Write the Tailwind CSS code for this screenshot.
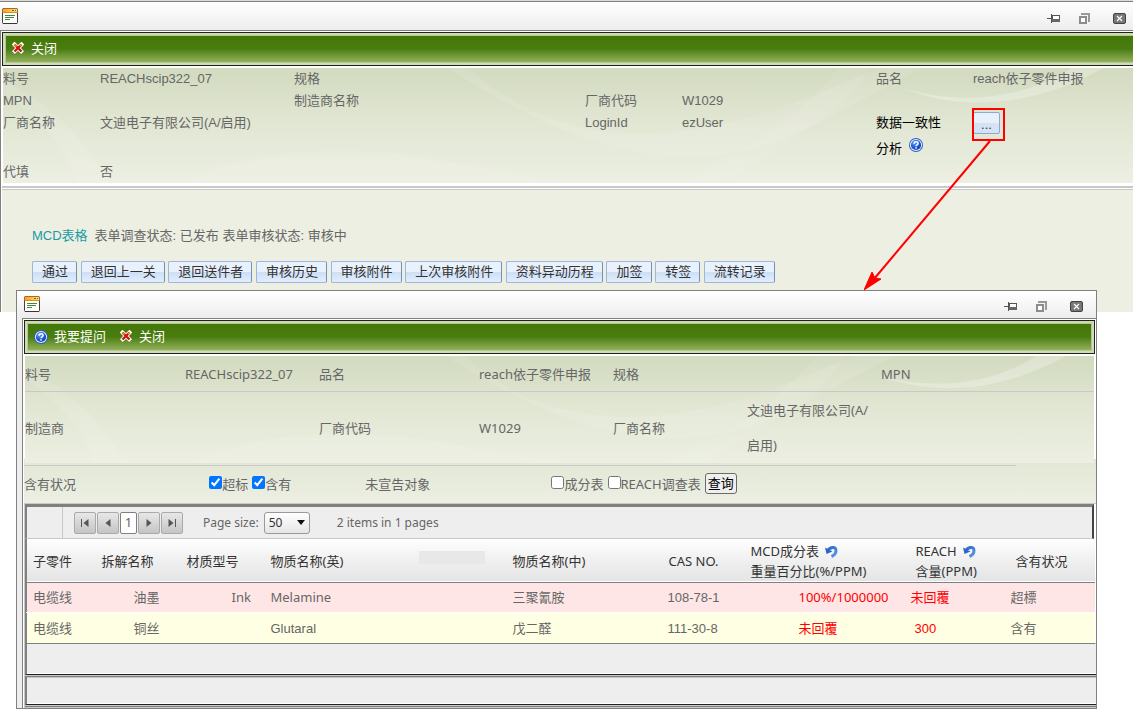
<!DOCTYPE html>
<html lang="zh-CN">
<head>
<meta charset="utf-8">
<meta name="viewport" content="width=device-width, initial-scale=1">
<title>REACH 审核</title>
<script src="https://cdn.jsdelivr.net/npm/@tailwindcss/browser@4"></script>
</head>
<body class="relative min-h-screen bg-white font-['Liberation_Sans','Noto_Sans_CJK_SC',sans-serif] text-[13px] text-[#666]">

<!-- Shared icons -->
<svg class="absolute size-0" aria-hidden="true">
  <defs>
    <linearGradient id="g-orange" x1="0" y1="0" x2="1" y2="0"><stop offset="0" stop-color="#f9a11c"/><stop offset="1" stop-color="#ffe07a"/></linearGradient>
    <radialGradient id="g-blue" cx=".35" cy=".3" r=".8"><stop offset="0" stop-color="#6fa8f5"/><stop offset=".5" stop-color="#1f5bd8"/><stop offset="1" stop-color="#0f3fb4"/></radialGradient>
    <linearGradient id="g-undo" x1="0" y1="0" x2="1" y2="1"><stop offset="0" stop-color="#2a62c4"/><stop offset="1" stop-color="#5d97ea"/></linearGradient>
  </defs>
  <symbol id="i-form" viewBox="0 0 16 16">
    <rect x=".5" y=".5" width="15" height="15" rx="1" fill="#fff" stroke="#4a4038"/>
    <rect x="1" y="1" width="14" height="4" fill="url(#g-orange)"/>
    <path d="M.5 5V1.500L1.500 .5h13l1 1V5" fill="none" stroke="#b4612c"/>
    <path d="M1 4.500h14" stroke="#d88a2a"/>
    <path d="M10 2.500h2M13 2.500h1" stroke="#3c7a2c"/>
    <path d="M3 7.500h10M3 9.500h9M3 11.500h5" stroke="#3d8a35"/>
    <path d="M1 15.500h14" stroke="#3c3430"/>
  </symbol>
  <symbol id="i-x" viewBox="0 0 12 12">
    <path d="M2.500 2.500l7 7M9.500 2.500l-7 7" stroke="#fff" stroke-width="4" stroke-linecap="square" stroke-dasharray="1.400 .6"/>
    <path d="M2.500 2.500l7 7M9.500 2.500l-7 7" stroke="#d40f0f" stroke-width="2.400"/>
    <path d="M2.200 2.200l2.300 2.300M9.500 2.500l-1.500 1.500" stroke="#f0962a" stroke-width="1.500"/>
  </symbol>
  <symbol id="i-help" viewBox="0 0 14 14">
    <circle cx="7" cy="7" r="7" fill="#2d5fc4"/>
    <circle cx="7" cy="7" r="6.100" fill="#e4eefb"/>
    <circle cx="7" cy="7" r="5.100" fill="url(#g-blue)"/>
    <path d="M5.100 5.700C5.100 4.300 6 3.700 7.100 3.700s2 .7 2 1.700c0 1.400-2 1.400-2 2.900" fill="none" stroke="#fff" stroke-width="1.500"/>
    <rect x="6.300" y="9.200" width="1.500" height="1.500" fill="#fff"/>
  </symbol>
  <symbol id="i-pin" viewBox="0 0 14 10">
    <path d="M0 4.500h4" stroke="#555"/>
    <path d="M4.500 0v9" stroke="#555"/>
    <rect x="5.500" y="1.500" width="7" height="6" fill="#fff" stroke="#555"/>
    <rect x="5" y="5" width="8" height="3" fill="#666"/>
  </symbol>
  <symbol id="i-restore" viewBox="0 0 11 11">
    <path d="M2 1h8v8" fill="none" stroke="#999" stroke-width="2"/>
    <rect x="1" y="4" width="6" height="6" fill="#fff" stroke="#8c8c8c" stroke-width="2"/>
  </symbol>
  <symbol id="i-close" viewBox="0 0 13 11">
    <rect x=".5" y=".5" width="12" height="10" rx="1.500" fill="#777" stroke="#444"/>
    <path d="M4 3l5 5M9 3l-5 5" stroke="#fff" stroke-width="1.200"/>
  </symbol>
  <symbol id="i-undo" viewBox="0 0 13 13">
    <path d="M2.500 6.200C4.500 2 11 .8 11 5.500c0 3-2 5-4.500 6" fill="none" stroke="url(#g-undo)" stroke-width="3"/>
    <path d="M0 2.500l1.500 6.500 6-2.500z" fill="#2a66ca"/>
  </symbol>
  <!-- Translucent ribbons that cross the green header panels -->
  <symbol id="i-ribbons" viewBox="0 0 1068 115" preserveAspectRatio="none">
    <path d="M0 12C50 40 80 75 100 115H70C60 80 30 45 0 25z" fill="#fff" opacity=".1"/>
    <path d="M440 0C500 60 580 75 660 60S790 15 830 0H870C790 40 740 85 660 88S510 60 420 0z" fill="#fff" opacity=".1"/>
    <path d="M680 115C730 80 790 50 820 0H790C760 40 720 75 640 115z" fill="#fff" opacity=".08"/>
    <path d="M850 20C910 46 980 36 1040 0H1010C960 34 900 36 850 20z" fill="#fff" opacity=".25"/>
    <path d="M170 115C230 80 330 78 400 90S520 115 560 115z" fill="#fff" opacity=".1"/>
  </symbol>
</svg>

<!-- Main window -->
<main class="border-t border-[#dcdcdc]">
  <header class="flex h-[30px] items-start justify-between border-y border-[#808080] bg-linear-to-b from-white to-[#ededed] pt-[6px] pr-[7px] pl-[2px]">
    <svg class="size-4"><use href="#i-form"/></svg>
    <div class="flex items-center pt-[5px]">
      <button type="button" aria-label="固定" class="mr-[18px]"><svg class="h-[10px] w-[14px]"><use href="#i-pin"/></svg></button>
      <button type="button" aria-label="还原" class="mr-[23px]"><svg class="size-[11px]"><use href="#i-restore"/></svg></button>
      <button type="button" aria-label="关闭窗口"><svg class="h-[11px] w-[13px]"><use href="#i-close"/></svg></button>
    </div>
  </header>

  <div class="border-l border-[#808080] bg-white pt-px pl-px">
    <div class="border border-r-0 border-[#1c2611] bg-[#d0d9bb] py-[2px] pl-[2px]">
      <div class="flex h-[28px] items-center border border-r-0 border-[#b5c794] bg-linear-to-b from-[#437706] via-[#4a7d10] to-[#93b158] pl-[6px] text-white">
        <button type="button" class="flex items-center gap-[7px]"><svg class="mb-[2px] size-3"><use href="#i-x"/></svg>关闭</button>
      </div>
    </div>

    <section class="relative mt-[2px] ml-px bg-linear-to-b from-[#d2dabf] via-[#e2e7d4] to-[#ecefe2] leading-[22px]">
      <svg class="absolute inset-0 size-full" aria-hidden="true"><use href="#i-ribbons"/></svg>
      <div class="relative grid grid-cols-[97fr_194fr_97fr_194fr_97fr_194fr_97fr_160fr] whitespace-nowrap">
        <div>料号</div><div>REACHscip322_07</div><div>规格</div><div></div><div></div><div></div><div>品名</div><div>reach依子零件申报</div>
        <div>MPN</div><div></div><div>制造商名称</div><div></div><div>厂商代码</div><div>W1029</div><div></div><div></div>
        <div>厂商名称</div><div>文迪电子有限公司(A/启用)</div><div></div><div></div><div>LoginId</div><div>ezUser</div>
        <div class="h-[49px] text-black">
          <div>数据一致性</div>
          <div class="flex pt-[4px]">分析<button type="button" aria-label="说明" class="mb-2 ml-[7px]"><svg class="size-[14px]"><use href="#i-help"/></svg></button></div>
        </div>
        <div class="relative">
          <button type="button" class="block h-[22px] w-[27px] rounded-[2px] border border-[#8fa9cd] bg-linear-to-b from-[#e8f0fc] from-50% to-[#d3e2f5] to-50% pt-[3px] leading-none text-[#333]">...</button>
          <span class="absolute -top-1 -left-px h-[33px] w-[33px] border-2 border-[#f00]"></span>
        </div>
        <div>代填</div><div>否</div><div></div><div></div><div></div><div></div><div></div><div></div>
      </div>
    </section>

    <section class="mt-[3px] border-t-2 border-[#c8c8c8]">
      <div class="mt-px min-h-[123px] border-t border-[#c8c8c8] bg-[#edefe2] pt-[36px] pl-[30px]">
        <p class="leading-[20px]"><a href="#" class="mr-[7px] text-[#1a9ba6]">MCD表格</a>表单调查状态: 已发布 表单审核状态: 审核中</p>
        <div class="pt-[15px] leading-[22px] [&>button]:h-[22px] [&>button]:rounded-[2px] [&>button]:border [&>button]:border-[#a0b6d8] [&>button]:border-r-[#6f8fbc] [&>button]:bg-linear-to-b [&>button]:from-[#e9f1fd] [&>button]:from-50% [&>button]:via-[#cddff5] [&>button]:via-50% [&>button]:to-[#e2edfc] [&>button]:pr-2 [&>button]:pl-[9px] [&>button]:align-top [&>button]:leading-[20px] [&>button]:text-[#333]">
          <button type="button">通过</button>
          <button type="button">退回上一关</button>
          <button type="button">退回送件者</button>
          <button type="button">审核历史</button>
          <button type="button">审核附件</button>
          <button type="button">上次审核附件</button>
          <button type="button">资料异动历程</button>
          <button type="button">加签</button>
          <button type="button">转签</button>
          <button type="button">流转记录</button>
        </div>
      </div>
    </section>
  </div>
</main>

<!-- Dialog window -->
<div role="dialog" aria-label="数据一致性分析" class="absolute top-[290px] right-9 left-4 border border-[#808080] bg-[#eee] font-['Noto_Sans','Noto_Sans_CJK_SC',sans-serif]">
  <header class="flex h-[27px] items-start justify-between bg-linear-to-b from-white to-[#ededed] pt-[5px] pr-[13px] pl-[7px]">
    <svg class="size-4"><use href="#i-form"/></svg>
    <div class="flex items-center pt-[5px]">
      <button type="button" aria-label="固定" class="mr-[18px]"><svg class="h-[10px] w-[14px]"><use href="#i-pin"/></svg></button>
      <button type="button" aria-label="还原" class="mr-[23px]"><svg class="size-[11px]"><use href="#i-restore"/></svg></button>
      <button type="button" aria-label="关闭窗口"><svg class="h-[11px] w-[13px]"><use href="#i-close"/></svg></button>
    </div>
  </header>

  <div class="ml-[5px] border-t border-l border-[#808080] bg-white pt-px pl-px">
    <div class="mr-px border border-[#1c2611] bg-[#d0d9bb] p-[2px]">
      <div class="flex h-[28px] items-center gap-[14px] border border-[#b5c794] bg-linear-to-b from-[#437706] via-[#4a7d10] to-[#93b158] pl-[6px] text-white">
        <button type="button" class="flex items-center gap-[6px]"><svg class="size-[14px]"><use href="#i-help"/></svg>我要提问</button>
        <button type="button" class="flex items-center gap-[7px]"><svg class="mb-[2px] size-3"><use href="#i-x"/></svg>关闭</button>
      </div>
    </div>

    <section class="relative mt-[2px] mr-[2px] ml-px bg-linear-to-b from-[#d2dabf] via-[#e2e7d4] to-[#ecefe2]">
      <svg class="absolute inset-0 size-full" aria-hidden="true"><use href="#i-ribbons"/></svg>
      <div class="relative grid grid-cols-[160fr_134fr_160fr_134fr_134fr_134fr_213fr] border-b border-[#c8c8c8] pt-px leading-[34px]">
        <div>料号</div><div>REACHscip322_07</div><div>品名</div><div class="whitespace-nowrap">reach依子零件申报</div><div>规格</div><div></div><div>MPN</div>
      </div>
      <div class="relative -mb-1 grid grid-cols-[160fr_134fr_160fr_134fr_134fr_134fr_213fr] items-center pt-px leading-[35px]">
        <div>制造商</div><div></div><div>厂商代码</div><div>W1029</div><div>厂商名称</div><div>文迪电子有限公司(A/<br>启用)</div><div></div>
      </div>
    </section>

    <section class="bg-linear-to-b from-[#e2e7d5] to-[#ecefe2] pt-[6px]">
      <div class="mr-20 border-t border-[#c8c8c8]"></div>
      <div class="grid grid-cols-[185fr_156fr_186fr_544fr] pb-px leading-[36px] whitespace-nowrap">
        <div>含有状况</div>
        <div class="flex items-center">
          <label class="mr-1 flex items-center"><input type="checkbox" checked class="mb-[3px] size-[13px]">超标</label>
          <label class="flex items-center"><input type="checkbox" checked class="mb-[3px] size-[13px]">含有</label>
        </div>
        <div>未宣告对象</div>
        <div class="flex items-center">
          <label class="mr-1 flex items-center"><input type="checkbox" class="mb-[3px] size-[13px]">成分表</label>
          <label class="mr-1 flex items-center"><input type="checkbox" class="mb-[3px] size-[13px]">REACH调查表</label>
          <button type="button" class="mb-[2px] h-[21px] rounded-[3px] border border-[#6b6b6b] bg-[#efefef] px-[2px] leading-[19px] text-black">查询</button>
        </div>
      </div>
    </section>

    <section class="border-t border-l border-[#c8c8c8] text-[#666]">
      <div class="mr-[2px] flex h-[35px] items-stretch border-t-[3px] border-r-2 border-b border-l-2 border-[#808080] border-r-[#444] border-b-[#c8c8c8] bg-[#eee]">
        <div class="w-9 border-r border-[#c8c8c8]"></div>
        <div class="flex items-center pl-[11px]">
          <nav aria-label="分页" class="flex gap-px [&>button]:flex [&>button]:h-[22px] [&>button]:items-center [&>button]:justify-center [&>button]:rounded-[2px] [&>button]:border">
            <button type="button" aria-label="首页" class="w-[22px] border-[#aaa] bg-linear-to-b from-[#e8e8e8] to-[#c4c4c4]"><svg class="size-[10px]" viewBox="0 0 10 10"><path d="M1.500 1v8" stroke="#555"/><path d="M8.500 1v8L3.500 5z" fill="#555"/></svg></button>
            <button type="button" aria-label="上一页" class="w-[22px] border-[#aaa] bg-linear-to-b from-[#e8e8e8] to-[#c4c4c4]"><svg class="size-[10px]" viewBox="0 0 10 10"><path d="M7.500 1v8L2.500 5z" fill="#555"/></svg></button>
            <button type="button" class="w-[17px] border-[#808080] bg-white">1</button>
            <button type="button" aria-label="下一页" class="w-[22px] border-[#aaa] bg-linear-to-b from-[#e8e8e8] to-[#c4c4c4]"><svg class="size-[10px]" viewBox="0 0 10 10"><path d="M2.500 1v8L7.500 5z" fill="#555"/></svg></button>
            <button type="button" aria-label="末页" class="w-[22px] border-[#aaa] bg-linear-to-b from-[#e8e8e8] to-[#c4c4c4]"><svg class="size-[10px]" viewBox="0 0 10 10"><path d="M8.500 1v8" stroke="#555"/><path d="M1.500 1v8L6.500 5z" fill="#555"/></svg></button>
          </nav>
          <label for="size" class="ml-5 text-[12px]">Page size:</label>
          <div class="relative ml-[5px]">
            <select id="size" class="block h-[22px] w-[46px] appearance-none rounded-[3px] border border-[#999] bg-linear-to-b from-white to-[#e6e6e6] pl-1 text-[12px] leading-[20px] text-[#333]"><option>50</option></select>
            <svg class="pointer-events-none absolute top-[8px] right-[5px] h-[5px] w-[8px]" viewBox="0 0 8 5"><path d="M0 0h8L4 5z" fill="#111"/></svg>
          </div>
          <span class="ml-[27px] text-[12px]">2 items in 1 pages</span>
        </div>
      </div>

      <div class="border-x border-b border-[#808080] border-r-transparent">
        <table class="w-full table-fixed border-collapse border-l border-[#808080] text-left [&_td]:p-0 [&_td]:pt-[2px] [&_td]:pl-[6px] [&_th]:p-0 [&_th]:pt-[2px] [&_th]:pl-[6px] [&_th]:font-normal">
          <colgroup><col class="w-[69px]"><col class="w-[85px]"><col class="w-[84px]"><col class="w-[242px]"><col class="w-[155px]"><col class="w-[83px]"><col class="w-[160px]"><col class="w-[100px]"><col></colgroup>
          <thead>
            <tr class="h-[43px] border-b border-[#808080] bg-linear-to-b from-white via-[#f0f0f0] to-[#e5e5e5] leading-[20px] whitespace-nowrap text-[#333]">
              <th scope="col">子零件</th><th scope="col">拆解名称</th><th scope="col">材质型号</th>
              <th scope="col"><div class="flex items-start justify-between pr-[22px]">物质名称(英)<span class="h-[13px] w-[66px] bg-[#e8e8e8]"></span></div></th>
              <th scope="col">物质名称(中)</th><th scope="col"><span class="pl-px">CAS NO.</span></th>
              <th scope="col"><div class="flex items-center gap-[6px]">MCD成分表<svg class="size-[13px]"><use href="#i-undo"/></svg></div>重量百分比(%/PPM)</th>
              <th scope="col"><div class="pl-[5px]"><div class="flex items-center gap-[6px]">REACH<svg class="size-[13px]"><use href="#i-undo"/></svg></div>含量(PPM)</div></th>
              <th scope="col"><span class="pl-[5px]">含有状况</span></th>
            </tr>
          </thead>
          <tbody>
            <tr class="h-[30px] border-b border-white bg-[#ffe6e6]">
              <td>电缆线</td><td><span class="pl-8">油墨</span></td><td><span class="pl-[45px]">Ink</span></td><td>Melamine</td><td>三聚氰胺</td>
              <td class="font-['Liberation_Sans']">108-78-1</td><td class="text-[#f00]"><span class="pl-12">100%/1000000</span></td><td class="text-[#f00]">未回覆</td><td>超標</td>
            </tr>
            <tr class="h-[31px] bg-[#ffffe3]">
              <td>电缆线</td><td><span class="pl-8">铜丝</span></td><td></td><td class="font-['Liberation_Sans']">Glutaral</td><td>戊二醛</td>
              <td class="font-['Liberation_Sans']">111-30-8</td><td class="text-[#f00]"><span class="pl-12">未回覆</span></td><td class="font-['Liberation_Sans'] text-[#f00]"><span class="pl-1">300</span></td><td>含有</td>
            </tr>
          </tbody>
        </table>
      </div>
      <div class="border-b border-l-2 border-[#808080] border-b-[#222]"><div class="h-[30px] border-b border-white bg-[#eee]"></div></div>
      <div class="h-[2px] border-b border-[#808080] bg-[#c8c8c8]"></div>
      <div class="border-b border-l-2 border-[#808080] border-b-[#222]"><div class="h-[27px] border-y border-t-[#c8c8c8] border-b-white bg-[#eee]"></div></div>
      <div class="h-[3px] border-y border-[#c8c8c8] bg-[#808080]"></div>
    </section>
  </div>
</div>

<!-- Arrow from the highlighted button to the dialog -->
<svg class="pointer-events-none absolute top-[140px] right-[141px] h-[151px] w-[128px]" viewBox="0 0 128 151" aria-hidden="true">
  <path d="M126 1L10 139" stroke="#f00" stroke-width="2"/>
  <path d="M0 150L8 132L11 138L17 139z" fill="#f00" stroke="#f00"/>
</svg>
</body>
</html>
